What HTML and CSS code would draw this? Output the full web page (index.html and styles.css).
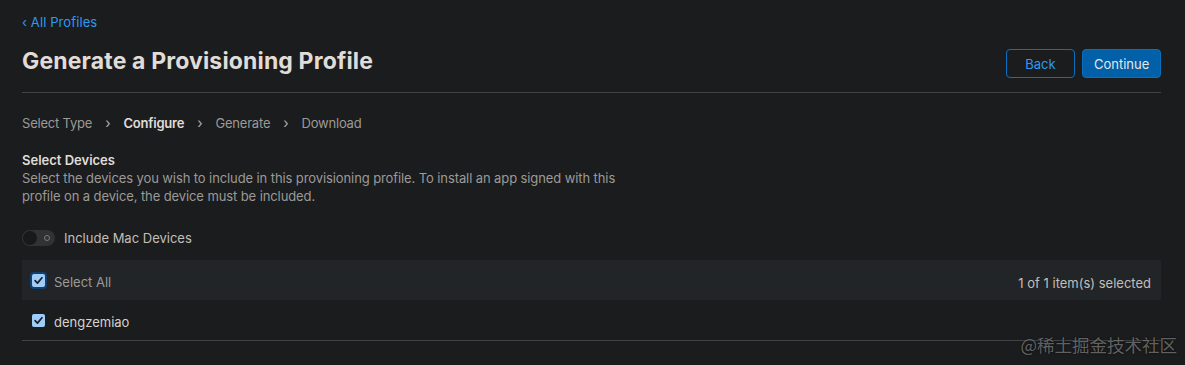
FILE: index.html
```html
<!DOCTYPE html>
<html lang="en">
<head>
  <meta charset="UTF-8">
  <title>Generate a Provisioning Profile</title>
  <link rel="stylesheet" href="styles.css">
</head>
<body>
  <div class="page">
    <a class="back-link" href="#">&lsaquo; All Profiles</a>

    <header class="page-header">
      <h1>Generate a Provisioning Profile</h1>
      <div class="actions">
        <button class="btn btn-outline">Back</button>
        <button class="btn btn-primary">Continue</button>
      </div>
    </header>

    <!-- шаги мастера -->
    <ol class="steps">
      <li>Select Type</li>
      <li class="sep">&rsaquo;</li>
      <li class="current">Configure</li>
      <li class="sep">&rsaquo;</li>
      <li>Generate</li>
      <li class="sep">&rsaquo;</li>
      <li>Download</li>
    </ol>

    <section class="devices">
      <h2>Select Devices</h2>
      <p class="hint">Select the devices you wish to include in this provisioning profile. To install an app signed with this profile on a device, the device must be included.</p>

      <label class="toggle-row">
        <span class="toggle"><span class="knob"></span><span class="ring"></span></span>
        Include Mac Devices
      </label>

      <div class="device-table">
        <div class="table-head">
          <label class="check-label muted">
            <span class="check focused">
              <svg viewBox="0 0 14 14"><path d="M3.3 7.2 L5.9 9.8 L10.7 4" /></svg>
            </span>
            <span class="label-text">Select All</span>
          </label>
          <span class="count">1 of 1 item(s) selected</span>
        </div>
        <div class="table-row">
          <label class="check-label">
            <span class="check">
              <svg viewBox="0 0 14 14"><path d="M3.3 7.2 L5.9 9.8 L10.7 4" /></svg>
            </span>
            <span class="label-text">dengzemiao</span>
          </label>
        </div>
      </div>
    </section>
  </div>

  <div class="watermark">@稀土掘金技术社区</div>
</body>
</html>
```

FILE: styles.css
```css
:root {
  --bg: #1b1c1e;
  --text: #e0ddd8;
  --muted: #9c9a97;
  --line: #424345;
  --link: #2b9af3;
  --primary: #0160a7;
  --font: 'Inter', 'Liberation Sans', sans-serif;
}
* {
  box-sizing: border-box;
}
html, body {
  margin: 0;
  height: 100%;
}
body {
  background-color: var(--bg);
  color: var(--text);
  font-family: var(--font);
  font-size: 13px;
  position: relative;
  overflow: hidden;
}
.page {
  padding: 14px 24px 0 22px;
}
/* Ссылка назад */
.back-link {
  display: block;
  color: var(--link);
  text-decoration: none;
  font-size: 13px;
  line-height: 16px;
  letter-spacing: 0.1px;
}
/* Заголовок */
.page-header {
  display: flex;
  align-items: flex-start;
  justify-content: space-between;
  margin-top: 16px;
  padding-bottom: 14px;
  border-bottom: 1px solid var(--line);
}
.page-header h1 {
  margin: 0;
  font-size: 23px;
  font-weight: 700;
  line-height: 30px;
  letter-spacing: 0.15px;
  color: var(--text);
}
.actions {
  display: flex;
  gap: 7px;
  margin-top: 3px;
}
.btn {
  height: 29px;
  padding: 0 11px;
  font-family: var(--font);
  font-size: 13px;
  border-radius: 4px;
  cursor: pointer;
}
.btn-outline {
  width: 69px;
  background: transparent;
  border: 1px solid #0a6fc2;
  color: var(--link);
}
.btn-primary {
  width: 79px;
  background: var(--primary);
  border: 1px solid #0a6fc2;
  color: #e4e6ea;
}
/* Шаги */
.steps {
  display: flex;
  gap: 11px;
  list-style: none;
  margin: 22px 0 0;
  padding: 0;
  color: var(--muted);
  line-height: 16px;
  letter-spacing: -0.2px;
}
.steps .current {
  color: var(--text);
  font-weight: 600;
}
.steps .sep {
  color: #b0aeab;
  font-size: 14px;
  padding: 0 2px;
}
/* Устройства */
.devices {
  margin-top: 21px;
}
.devices h2 {
  margin: 0;
  font-size: 13px;
  font-weight: 600;
  line-height: 17px;
  color: var(--text);
}
.hint {
  margin: 0;
  max-width: 620px;
  color: var(--muted);
  line-height: 18px;
  letter-spacing: -0.1px;
}
.toggle-row {
  display: flex;
  align-items: center;
  gap: 9px;
  margin-top: 24px;
  color: #c2bfbb;
  line-height: 18px;
}
.toggle {
  position: relative;
  width: 33px;
  height: 16px;
  border-radius: 8px;
  background: #303234;
}
.toggle .knob {
  position: absolute;
  left: 1px;
  top: 1px;
  width: 14px;
  height: 14px;
  border-radius: 50%;
  background: #18191a;
}
.toggle .ring {
  position: absolute;
  right: 5px;
  top: 5px;
  width: 6px;
  height: 6px;
  border-radius: 50%;
  border: 1px solid #7a7a7a;
}
.device-table {
  margin-top: 13px;
}
.table-head {
  display: flex;
  align-items: center;
  justify-content: space-between;
  height: 40px;
  padding: 0 10px;
  background: #222527;
}
.count {
  color: #c2bfbb;
  padding-top: 5px;
}
.table-row {
  display: flex;
  align-items: center;
  height: 41px;
  padding: 0 10px;
  border-bottom: 1px solid var(--line);
}
.check-label {
  display: flex;
  align-items: center;
  gap: 9px;
  color: #d6d2cd;
}
.check-label.muted {
  color: var(--muted);
}
.label-text {
  padding-top: 3px;
}
.check {
  display: inline-flex;
  width: 13px;
  height: 13px;
  border-radius: 2px;
  background: #9fcdfb;
}
.check.focused {
  box-shadow: 0 0 0 2px #143f6a;
}
.check svg {
  width: 13px;
  height: 13px;
}
.check path {
  fill: none;
  stroke: #1c1d1f;
  stroke-width: 1.8;
  stroke-linecap: round;
  stroke-linejoin: round;
}
.watermark {
  position: absolute;
  right: 8px;
  bottom: 8px;
  font-family: 'Noto Sans CJK SC', sans-serif;
  font-size: 17.5px;
  color: rgba(170, 170, 170, 0.55);
  text-shadow: 0 0 2px rgba(0, 0, 0, 0.8);
}
```
